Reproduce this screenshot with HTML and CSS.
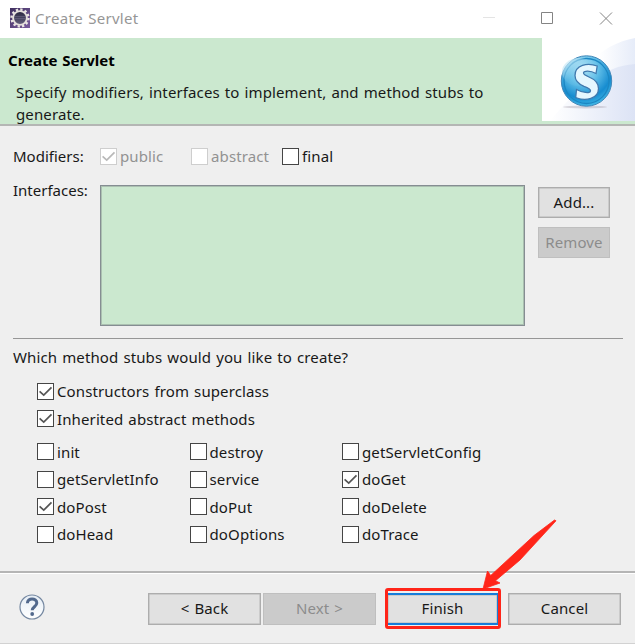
FILE: index.html
```html
<!DOCTYPE html>
<html lang="en">
<head>
<meta charset="utf-8">
<title>Create Servlet</title>
<link rel="stylesheet" href="styles.css">
</head>
<body>
<svg class="defs" width="0" height="0"><defs>
<symbol id="tick" viewBox="0 0 17 17"><path d="M1.800 8.300 6.500 12.700 15.300 3.900" fill="none" stroke="currentColor" stroke-width="1.900"/></symbol>
</defs></svg>
<div class="window">
<header class="titlebar">
<svg class="app-icon" width="20" height="20" viewBox="0 0 20 20">
<defs><linearGradient id="eg" x2="1" y2="1"><stop offset="0" stop-color="#40305f"/><stop offset="1" stop-color="#7a5c9e"/></linearGradient><linearGradient id="eh" x2="0" y2="1"><stop stop-color="#27243c"/><stop offset="1" stop-color="#65617f"/></linearGradient></defs>
<rect width="20" height="20" fill="url(#eg)"/>
<circle cx="10" cy="10" r="8.5" fill="none" stroke="#ebe7e4" stroke-width="2.4" stroke-dasharray="2.3 2.15"/>
<circle cx="10" cy="10" r="6.9" fill="url(#eh)" stroke="#e5dfdc" stroke-width="1.9"/>
<path d="M4.5 8.5h11M4.2 10.5h11.6" stroke="#77718c" stroke-width=".5"/>
</svg>
<span class="window-title">Create Servlet</span>
<svg class="window-controls" width="129" height="14" viewBox="0 0 129 14"><path d="M0 6.500h12" stroke="#e4e4e4"/><path d="M58.500 1.500h11v11h-11z" fill="none" stroke="#848484"/><path d="m117 1.500 12 12m0-12-12 12" stroke="#858585"/></svg>
</header>
<section class="banner">
<div class="banner-copy"><h1>Create Servlet</h1><p>Specify modifiers, interfaces to implement, and method stubs to<br>generate.</p></div>
<svg class="banner-art" width="93" height="83" viewBox="0 0 93 83">
<defs><linearGradient id="wing"><stop stop-color="#fff"/><stop offset="1" stop-color="#dce3f5"/></linearGradient><linearGradient id="arc"><stop offset=".45" stop-color="#fff"/><stop offset="1" stop-color="#e6ecf9"/></linearGradient>
<radialGradient id="ball" cx=".42" cy=".25" r=".78"><stop stop-color="#bce9fa"/><stop offset=".4" stop-color="#62bfe8"/><stop offset=".75" stop-color="#168cd0"/><stop offset="1" stop-color="#45bce8"/></radialGradient>
<linearGradient id="gloss" x2="1" y2="1"><stop stop-color="#f6fdff"/><stop offset=".5" stop-color="#75c5e8" stop-opacity=".2"/></linearGradient></defs>
<rect width="93" height="83" fill="#fff"/><path d="M28 83C34 29 58 7 93 0v83z" fill="url(#arc)"/><path d="M8 83C33 52 61 28 93 26v57z" fill="url(#wing)"/>
<ellipse cx="43" cy="69" rx="22" ry="1.500" fill="#8e8493" opacity=".3"/>
<circle cx="44.5" cy="43" r="25.200" fill="url(#ball)" stroke="#4387b8"/><circle cx="44.5" cy="43" r="22.500" fill="none" stroke="#1c87c3" stroke-width="1.3"/><ellipse cx="37" cy="34" rx="17" ry="14" fill="url(#gloss)"/>
<path d="M55.200 28C45.500 24.200 33 27 33 37.500C33 43 36.500 46 42 48.300C46.500 50 48.500 51 48.500 52.700C48.500 56 40 54.500 34.500 51.500L33.700 59.500C43.500 63.500 56.500 61 56.500 50.500C56.500 44.500 53 41.500 47 39C43.500 37.500 41.500 36.500 41.500 35C41.500 32.500 48.500 32.500 54 35.500z" fill="#e5f7ff" stroke="#3f79ae" stroke-width="1.3"/>
</svg>
</section>
<main class="content">
<div class="modifiers"><span class="field-label">Modifiers:</span>
<label class="check disabled"><span class="box"><svg><use href="#tick"/></svg></span><span>public</span></label>
<label class="check disabled"><span class="box"></span><span>abstract</span></label>
<label class="check"><span class="box"></span><span>final</span></label></div>
<div class="interfaces"><span class="field-label">Interfaces:</span><div class="interface-list"></div><div class="side-buttons"><button>Add...</button><button disabled>Remove</button></div></div>
<div class="rule"></div>
<p class="question">Which method stubs would you like to create?</p>
<div class="general-options">
<label class="check"><span class="box"><svg><use href="#tick"/></svg></span><span>Constructors from superclass</span></label>
<label class="check"><span class="box"><svg><use href="#tick"/></svg></span><span>Inherited abstract methods</span></label>
</div>
<div class="method-grid">
<label class="check"><span class="box"></span><span>init</span></label><label class="check"><span class="box"></span><span>destroy</span></label><label class="check"><span class="box"></span><span>getServletConfig</span></label>
<label class="check"><span class="box"></span><span>getServletInfo</span></label><label class="check"><span class="box"></span><span>service</span></label><label class="check"><span class="box"><svg><use href="#tick"/></svg></span><span>doGet</span></label>
<label class="check"><span class="box"><svg><use href="#tick"/></svg></span><span>doPost</span></label><label class="check"><span class="box"></span><span>doPut</span></label><label class="check"><span class="box"></span><span>doDelete</span></label>
<label class="check"><span class="box"></span><span>doHead</span></label><label class="check"><span class="box"></span><span>doOptions</span></label><label class="check"><span class="box"></span><span>doTrace</span></label>
</div>
</main>
<footer class="actions">
<svg class="help" width="26" height="26" viewBox="0 0 26 26"><defs><linearGradient id="hg" x2="0" y2="1"><stop stop-color="#e5edf5"/><stop offset="1" stop-color="#fff"/></linearGradient></defs><circle cx="13" cy="13" r="12" fill="url(#hg)" stroke="#7487a0" stroke-width="1.2"/><path d="M8.400 9.200C8.400 3.500 17.800 3.800 17.800 9c0 3.500-4.600 4-4.600 7.300" fill="none" stroke="#52698d" stroke-width="3"/><circle cx="13.200" cy="20" r="1.900" fill="#52698d"/></svg>
<button>&lt; Back</button><button disabled>Next &gt;</button><button class="finish">Finish<span class="highlight"></span></button><button>Cancel</button>
</footer>
<svg class="arrow" width="76" height="72" viewBox="0 0 76 72"><path d="M72.500 1 52 16.500 8.700 56.500 5.500 52 1 70 18 64 13.500 61.700 38 41 74 1.800z" fill="#ff2519" stroke="#ff2519" stroke-width=".8" stroke-linejoin="round"/></svg>
</div>
</body>
</html>
```
FILE: styles.css
```css
* { box-sizing: border-box; }
body { margin: 0; background: #fff; font-family: "Noto Sans", "Open Sans", sans-serif; font-size: 15px; letter-spacing: .12px; word-spacing: 1px; color: #181818; }
.defs { position: absolute; }
.window { position: relative; width: 635px; height: 644px; overflow: hidden; background: #efefef; display: flex; flex-direction: column; }
.titlebar { height: 38px; flex: none; background: #fff; display: flex; align-items: center; padding: 0 23px 2px 10px; }
.window-title { margin-left: 5px; color: #969696; line-height: 34px; letter-spacing: .3px; }
.window-controls { margin-left: auto; overflow: visible; }
.banner { height: 88px; flex: none; background: #cbe8cf; border-bottom: 2px solid #b4b6b4; display: flex; justify-content: space-between; }
.banner-copy { padding: 11px 0 0 8px; white-space: nowrap; }
h1 { margin: 0; font-size: 15px; line-height: 22px; font-weight: 700; letter-spacing: 0; color: #000; }
p { margin: 0; }
.banner-copy p { margin: 11px 0 0 8px; line-height: 21.500px; }
.banner-art { flex: none; }
.content { height: 445px; flex: none; padding: 20px 12px 0 13px; }
.check { display: flex; align-items: center; height: 20px; gap: 3px; white-space: nowrap; line-height: 20px; }
.box { width: 17px; height: 17px; flex: none; border: 1.500px solid #454545; background: #fff; color: #555; display: flex; }
.box svg { width: 100%; height: 100%; }
.disabled { color: #929292; }
.disabled .box { border-color: #cecece; color: #b9b9b9; }
.modifiers { display: grid; grid-template-columns: 87px 91px 91px auto; height: 20px; line-height: 20px; }
.interfaces { display: flex; margin-top: 19px; height: 141px; }
.field-label { width: 87px; line-height: 20px; flex: none; white-space: nowrap; letter-spacing: 0; }
.interfaces .field-label { margin-top: -5px; }
.interface-list { width: 425px; height: 141px; border: 1.500px solid #858d92; box-shadow: inset 0 0 0 1px #abc0b1; background: #cbe8cf; }
.side-buttons { display: grid; gap: 9px; align-content: start; margin: 2px 0 0 13px; }
button { appearance: none; margin: 0; padding: 0 0 2px; width: 72px; height: 31px; border: 1px solid #adadad; box-shadow: inset 0 0 0 .5px #b5b5b5; border-radius: 0; background: #e1e1e1; color: #181818; font: inherit; letter-spacing: inherit; word-spacing: inherit; }
button:disabled { background: #cbcbcb; border-color: #bfbfbf; color: #8c8c8c; box-shadow: none; }
.rule { height: 1px; background: #969696; margin-top: 12px; }
.question { margin-top: 8px; line-height: 21px; white-space: nowrap; }
.general-options { margin: 13px 0 0 24px; display: grid; gap: 7.500px; }
.method-grid { margin: 13px 0 0 24px; display: grid; grid-template-columns: 152.500px 152.500px auto; row-gap: 7.500px; }
.actions { flex: 1; border-top: 2px solid #b5b5b5; display: flex; padding: 20px 13px 0 19px; border-bottom: 1px solid #d2d2d2; box-shadow: inset 0 1px #fff; }
.actions button { width: 113px; height: 32px; flex: none; }
.actions .help { margin: 1px 103px 0 0; flex: none; }
.actions button + button { margin-left: 2px; }
.actions button.finish { position: relative; margin-left: 10px; border: 2px solid #167cda; }
.actions .finish + button { margin-left: 9px; }
.highlight { position: absolute; inset: -7px -4px -6px -3px; border: 3px solid #ff2519; border-radius: 3px; }
.arrow { position: absolute; left: 482px; top: 519px; }
```
